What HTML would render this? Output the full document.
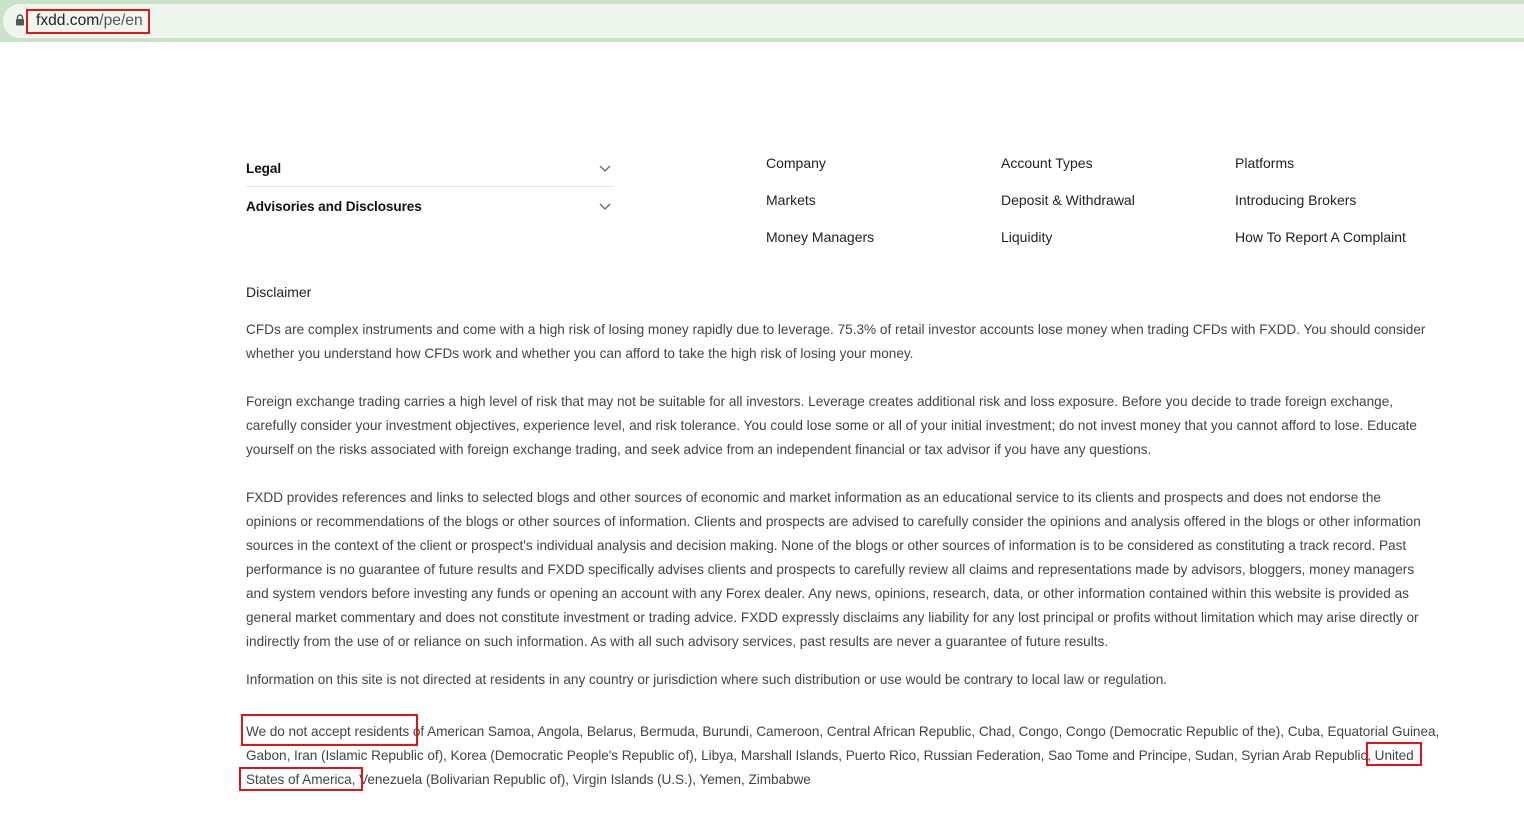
<!DOCTYPE html>
<html><head><meta charset="utf-8"><style>
body{margin:0;width:1524px;height:828px;background:#fff;font-family:"Liberation Sans",sans-serif;position:relative;overflow:hidden;color:#333}
.bar{position:absolute;left:0;top:0;width:1524px;height:42px;background:#c9e2c9}
.pill{position:absolute;left:3px;top:4px;width:1540px;height:34px;border-radius:17px;background:#eff6ee}
.url{position:absolute;left:36px;top:12px;font-size:15.6px;color:#222}
.url span{color:#555}
.rb{position:absolute;border:2px solid #e0141a;box-sizing:border-box}
.t{position:absolute;white-space:nowrap}
.acc{font-weight:bold;font-size:13.6px;color:#111;letter-spacing:-0.1px}
.line{position:absolute;left:246px;top:186px;width:368px;height:1px;background:#e6e6e6}
.lk{font-size:14px;color:#222}
.par{position:absolute;left:246px;font-size:13.6px;line-height:24px;color:#444;white-space:nowrap}
</style></head><body>
<div class="bar"><div class="pill"></div></div>
<svg style="position:absolute;left:15px;top:14px" width="10" height="12" viewBox="0 0 10 12"><path d="M2.5 5V3.5a2.5 2.5 0 0 1 5 0V5" fill="none" stroke="#555" stroke-width="1.4"/><rect x="1" y="5" width="8" height="6.5" rx="1" fill="#555"/></svg>
<div class="url">fxdd.com<span>/pe/en</span></div>
<div class="rb" style="left:26px;top:9px;width:124px;height:25px"></div>

<div class="t acc" style="left:246px;top:161px">Legal</div>
<div class="line"></div>
<div class="t acc" style="left:246px;top:199px">Advisories and Disclosures</div>
<svg style="position:absolute;left:599px;top:165px" width="12" height="8"><path d="M1 1l5 5 5-5" fill="none" stroke="#666" stroke-width="1.3"/></svg>
<svg style="position:absolute;left:599px;top:203px" width="12" height="8"><path d="M1 1l5 5 5-5" fill="none" stroke="#666" stroke-width="1.3"/></svg>

<div class="t lk" style="left:766px;top:155px">Company</div>
<div class="t lk" style="left:766px;top:192px">Markets</div>
<div class="t lk" style="left:766px;top:229px">Money Managers</div>
<div class="t lk" style="left:1001px;top:155px">Account Types</div>
<div class="t lk" style="left:1001px;top:192px">Deposit &amp; Withdrawal</div>
<div class="t lk" style="left:1001px;top:229px">Liquidity</div>
<div class="t lk" style="left:1235px;top:155px">Platforms</div>
<div class="t lk" style="left:1235px;top:192px">Introducing Brokers</div>
<div class="t lk" style="left:1235px;top:229px">How To Report A Complaint</div>

<div class="t lk" style="left:246px;top:284px">Disclaimer</div>

<div class="par" style="top:318px">CFDs are complex instruments and come with a high risk of losing money rapidly due to leverage. 75.3% of retail investor accounts lose money when trading CFDs with FXDD. You should consider<br>whether you understand how CFDs work and whether you can afford to take the high risk of losing your money.</div>
<div class="par" style="top:390px">Foreign exchange trading carries a high level of risk that may not be suitable for all investors. Leverage creates additional risk and loss exposure. Before you decide to trade foreign exchange,<br>carefully consider your investment objectives, experience level, and risk tolerance. You could lose some or all of your initial investment; do not invest money that you cannot afford to lose. Educate<br>yourself on the risks associated with foreign exchange trading, and seek advice from an independent financial or tax advisor if you have any questions.</div>
<div class="par" style="top:486px">FXDD provides references and links to selected blogs and other sources of economic and market information as an educational service to its clients and prospects and does not endorse the<br>opinions or recommendations of the blogs or other sources of information. Clients and prospects are advised to carefully consider the opinions and analysis offered in the blogs or other information<br>sources in the context of the client or prospect's individual analysis and decision making. None of the blogs or other sources of information is to be considered as constituting a track record. Past<br>performance is no guarantee of future results and FXDD specifically advises clients and prospects to carefully review all claims and representations made by advisors, bloggers, money managers<br>and system vendors before investing any funds or opening an account with any Forex dealer. Any news, opinions, research, data, or other information contained within this website is provided as<br>general market commentary and does not constitute investment or trading advice. FXDD expressly disclaims any liability for any lost principal or profits without limitation which may arise directly or<br>indirectly from the use of or reliance on such information. As with all such advisory services, past results are never a guarantee of future results.</div>
<div class="par" style="top:668px">Information on this site is not directed at residents in any country or jurisdiction where such distribution or use would be contrary to local law or regulation.</div>
<div class="par" style="top:720px;letter-spacing:-0.05px">We do not accept residents of American Samoa, Angola, Belarus, Bermuda, Burundi, Cameroon, Central African Republic, Chad, Congo, Congo (Democratic Republic of the), Cuba, Equatorial Guinea,<br>Gabon, Iran (Islamic Republic of), Korea (Democratic People's Republic of), Libya, Marshall Islands, Puerto Rico, Russian Federation, Sao Tome and Principe, Sudan, Syrian Arab Republic, United<br>States of America, Venezuela (Bolivarian Republic of), Virgin Islands (U.S.), Yemen, Zimbabwe</div>

<div class="rb" style="left:241px;top:714px;width:177px;height:32px"></div>
<div class="rb" style="left:1366px;top:742px;width:56px;height:24px"></div>
<div class="rb" style="left:239px;top:767px;width:124px;height:24px"></div>
</body></html>
